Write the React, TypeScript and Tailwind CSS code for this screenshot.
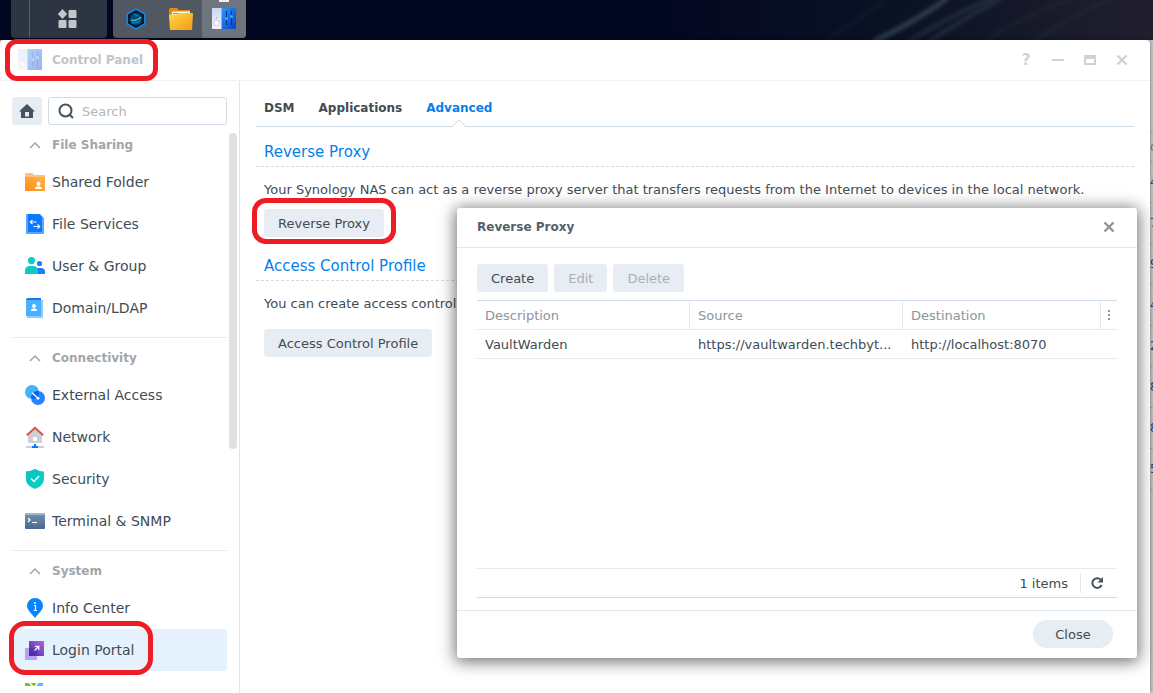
import { type ReactNode } from "react";

const frame = "pointer-events-none absolute border-[5px] border-[#ee1c25]";
const btn = "h-7 rounded-[3px] bg-[#e8edf4] px-3.5 pt-0.5 text-[#414b55]";
const btnOff = "h-7 rounded-[3px] bg-[#e8edf4] px-3.5 pt-0.5 text-[#a9b0b8]";
const sectionTitle = "h-7 border-b border-dashed border-[#cfdbe6] pl-2 pt-px text-[15px] leading-6 text-[#057feb]";
const headCell = "border-b border-r border-t border-b-[#e3e9f0] border-r-[#e3e9f0] border-t-[#cfdbe6] px-2 pt-0.5 font-normal";
const bodyCell = "border-b border-[#e3e9f0] px-2 pt-0.5";

function PanelIcon({ faded = false }: { faded?: boolean }) {
  return (
    <svg viewBox="0 0 24 22" className={faded ? "h-[22px] w-6 opacity-40" : "h-[22px] w-6"} aria-hidden="true">
      <defs>
        <linearGradient id="panelBlue" x1="0" y1="0" x2="1" y2="1">
          <stop offset="0" stopColor="#2a9af8" />
          <stop offset="1" stopColor="#0a3fcc" />
        </linearGradient>
        <linearGradient id="panelWhite" x1="0" y1="0" x2="0" y2="1">
          <stop offset="0" stopColor="#ccd8f4" />
          <stop offset="1" stopColor="#f2f2f8" />
        </linearGradient>
      </defs>
      <path d="M1 0h11v21H1q-1 0-1-1V1q0-1 1-1z" fill="url(#panelWhite)" />
      <circle cx="4.5" cy="15" r="2.800" fill="#fff" stroke="#b9c0d4" strokeWidth=".7" />
      <circle cx="4.5" cy="9.800" r=".6" fill="#8189a0" />
      <path d="M9.500 0H23q1 0 1 1v19q0 1-1 1H9.500z" fill="url(#panelBlue)" />
      <path d="M14.500 3v14M19.500 3v14" stroke="#062f96" strokeWidth="1" />
      <circle cx="14.500" cy="10.500" r="1.500" fill="#4aa5f5" />
      <circle cx="19.500" cy="8.500" r="1.500" fill="#4aa5f5" />
    </svg>
  );
}

function Icon({ children }: { children: ReactNode }) {
  return (
    <svg viewBox="0 0 22 22" className="h-[22px] w-[22px] shrink-0" aria-hidden="true">
      {children}
    </svg>
  );
}

const icons: Record<string, ReactNode> = {
  shared: (
    <Icon>
      <defs>
        <linearGradient id="og" x1="0" x2="1" y1="1" y2="0">
          <stop offset="0" stopColor="#ff8c1a" />
          <stop offset="1" stopColor="#ffb845" />
        </linearGradient>
      </defs>
      <path d="M1 3q0-1 1-1h6l2 2h10q1 0 1 1v3H1z" fill="#ffc27d" />
      <path d="M1 6h20v13q0 1-1 1H2q-1 0-1-1z" fill="url(#og)" />
      <circle cx="14.5" cy="12.8" r="2.100" fill="#fff" />
      <path d="M11 18q0-2.500 2.500-2.500h2q2.500 0 2.500 2.500z" fill="#fff" />
    </Icon>
  ),
  services: (
    <Icon>
      <path d="M2 1h14l4 4v16H2z" fill="#5ba5ff" />
      <path d="M4 1h11l3 3v15H4z" fill="#0a78ff" />
      <path d="M12.500 9h-6M8.500 6.800 6.300 9l2.200 2.200M9.500 13.500h6M13.500 11.300l2.200 2.200-2.200 2.200" fill="none" stroke="#fff" strokeWidth="1.200" />
    </Icon>
  ),
  users: (
    <Icon>
      <circle cx="15.500" cy="8.500" r="2.600" fill="#1f7cff" />
      <path d="M10 19v-2q0-4 4-4h3q4 0 4 4v2z" fill="#1f7cff" />
      <circle cx="7.500" cy="5.600" r="3.600" fill="#0fccc2" />
      <path d="M1 19v-3q0-5 5-5h3q5 0 5 5v3z" fill="#0fc9c4" />
    </Icon>
  ),
  domain: (
    <Icon>
      <path d="M3 3h16v18H3z" fill="#8ccbff" />
      <path d="M2 3q0-2 2-2h13v3H2z" fill="#1b74f5" />
      <path d="M2 3h15v16H2z" fill="#4bb0ff" />
      <circle cx="10" cy="9" r="1.900" fill="#fff" />
      <path d="M6.800 14q0-2.500 2.200-2.500h2q2.200 0 2.200 2.500z" fill="#fff" />
    </Icon>
  ),
  external: (
    <Icon>
      <circle cx="8" cy="8" r="7" fill="#43b3fb" />
      <circle cx="14" cy="14" r="7" fill="#2385ff" />
      <path d="M7 13a7 7 0 0 1 8-5.800A7 7 0 0 1 8.700 15z" fill="#0b63e8" />
      <path d="m8 8.800 6 5.500" stroke="#fff" strokeWidth="1.300" />
      <circle cx="14" cy="14.300" r="1.400" fill="#fff" />
    </Icon>
  ),
  network: (
    <Icon>
      <path d="M4 8 11 2l7 6v8q0 1-1 1H5q-1 0-1-1z" fill="#cdd1d6" />
      <rect x="9" y="11" width="4" height="4" rx=".5" fill="#fff" />
      <path d="m2.800 9.300 8.200-7.500 8.200 7.500" fill="none" stroke="#d9534b" strokeWidth="2" />
      <path d="M2 20h18v2H2z" fill="#cbd0d6" />
      <path d="M10 18h2v2h2v2H8v-2h2z" fill="#0f74f5" />
    </Icon>
  ),
  security: (
    <Icon>
      <path d="M11 1q5 2.500 9 2.500V11q0 6.500-9 10-9-3.500-9-10V3.500Q6 3.500 11 1z" fill="#08cfc4" />
      <path d="M11 1Q6 3.500 2 3.500V11q0 4 3.500 7L18 5z" fill="#0abeb9" opacity=".5" />
      <path d="m7 10.500 3 3 5-5.500" fill="none" stroke="#fff" strokeWidth="1.500" />
    </Icon>
  ),
  terminal: (
    <Icon>
      <defs>
        <linearGradient id="tg" x1="0" y1="0" x2="0" y2="1">
          <stop offset="0" stopColor="#7591b0" />
          <stop offset="1" stopColor="#48698f" />
        </linearGradient>
      </defs>
      <rect x="1" y="3" width="20" height="16" rx="1" fill="url(#tg)" />
      <path d="M1 4q0-1 1-1h18q1 0 1 1v1H1z" fill="#9cb7d2" />
      <path d="m4 8 2 2-2 2M8 12.500h5" fill="none" stroke="#fff" strokeWidth="1.200" />
    </Icon>
  ),
  info: (
    <Icon>
      <path d="M11 1a8 8 0 0 1 8 8c0 4-4.500 7.500-8 12-3.500-4.500-8-8-8-12a8 8 0 0 1 8-8z" fill="#0a83ff" />
      <path d="M10 8.500h1.500v4.500M9.800 13.500H13" fill="none" stroke="#fff" strokeWidth="1.200" />
      <circle cx="11" cy="6" r=".9" fill="#fff" />
    </Icon>
  ),
  portal: (
    <Icon>
      <defs>
        <linearGradient id="pg" x1="1" y1="0" x2="0" y2="1">
          <stop offset="0" stopColor="#b265d8" />
          <stop offset="1" stopColor="#3c2ea8" />
        </linearGradient>
      </defs>
      <rect x="1" y="9" width="12" height="12" rx=".5" fill="#b8a2f2" />
      <rect x="5" y="2" width="15" height="15" rx=".5" fill="url(#pg)" />
      <path d="M5 9h8v8H5z" fill="#4429a6" opacity=".45" />
      <path d="m10.500 11.500 4-4M11 7.300h3.800v3.800" fill="none" stroke="#fff" strokeWidth="1.200" />
    </Icon>
  ),
  regional: (
    <Icon>
      <path d="M1 2h18v18H1z" fill="#7bc80f" />
      <path d="M12 2h7v8h-7z" fill="#5cbcff" />
      <path d="m5 1 5 6 4-6" fill="none" stroke="#fff" strokeWidth="1.500" />
    </Icon>
  ),
};

const sections = [
  { title: "File Sharing", items: [["shared", "Shared Folder"], ["services", "File Services"], ["users", "User & Group"], ["domain", "Domain/LDAP"]] },
  { title: "Connectivity", items: [["external", "External Access"], ["network", "Network"], ["security", "Security"], ["terminal", "Terminal & SNMP"]] },
  { title: "System", items: [["info", "Info Center"], ["portal", "Login Portal"], ["regional", "Regional Options"]] },
];

function Taskbar() {
  return (
    <header className="relative flex h-10 shrink-0 overflow-hidden bg-[#020720] pl-[11px]">
      <svg viewBox="0 0 500 40" preserveAspectRatio="none" className="pointer-events-none absolute right-0 top-0 h-10 w-[500px]" aria-hidden="true">
        <defs>
          <linearGradient id="sky" x1="0" y1="0" x2="1" y2="0">
            <stop offset="0" stopColor="#020720" />
            <stop offset=".5" stopColor="#0b1224" />
            <stop offset="1" stopColor="#211f2e" />
          </linearGradient>
          <filter id="haze"><feGaussianBlur stdDeviation="2" /></filter>
        </defs>
        <path d="M0 0h500v40H0z" fill="url(#sky)" />
        <g filter="url(#haze)" fill="none" stroke="#5b8191">
          <path d="M220 42q45-22 75-44" strokeWidth="4" opacity=".5" />
          <path d="M255 42q45-28 85-44M275 42q40-26 75-44" strokeWidth="2" opacity=".4" />
          <path d="M330 42q45-28 90-44M170 42q30-18 60-40M380 42q40-28 80-44" strokeWidth="2" opacity=".15" />
        </g>
      </svg>
      <button aria-label="Main Menu" className="relative h-[38px] w-24 rounded-b bg-[#2d3442]">
        <span className="absolute left-[18px] top-0 h-[37px] w-px bg-[#596170]" />
        <svg viewBox="0 0 20 20" className="ml-[46px] h-5 w-5" fill="#c3c6cb" aria-hidden="true">
          <path d="m5.500 0 4.700 5-4.700 5L.800 5z" />
          <rect x="11.500" y="1" width="8" height="8" rx="1" />
          <rect x="1.500" y="11" width="8" height="8" rx="1" />
          <rect x="11.500" y="11" width="8" height="8" rx="1" />
        </svg>
      </button>
      <div className="relative ml-1.5 flex h-[38px] overflow-hidden rounded-b bg-[#525862]">
        <button aria-label="Resource" className="flex w-[46px] items-center justify-center">
          <svg viewBox="0 0 22 22" className="h-[22px] w-[22px]" aria-hidden="true">
            <path d="m11 1 8.800 5v10L11 21l-8.800-5V6z" fill="#061a33" stroke="#1583e0" strokeWidth="1.600" strokeLinejoin="round" />
            <circle cx="11" cy="11" r="6" fill="#07486f" />
            <path d="M6 12q5 2 10-3" fill="none" stroke="#27c0e0" strokeWidth="1.500" />
            <path d="M6.500 14.500q4.500 1.500 9-1.500M9 6.500l4 1" fill="none" stroke="#1489b8" strokeWidth="1.200" />
          </svg>
        </button>
        <button aria-label="File Station" className="flex w-[43px] items-center justify-center">
          <svg viewBox="0 0 24 24" className="h-6 w-6" aria-hidden="true">
            <defs>
              <linearGradient id="fg" x1="0" y1="0" x2="1" y2="1">
                <stop offset="0" stopColor="#ffd84b" />
                <stop offset="1" stopColor="#f79a12" />
              </linearGradient>
            </defs>
            <path d="M0 2.500Q0 1 1.500 1H8l2 2h11v8H0z" fill="#dc8b10" />
            <path d="M3 4.500h18v7H3z" fill="#f4f8ec" />
            <path d="M4 6h16v1H4z" fill="#5fb987" />
            <path d="M0 8.500q0-1 1-1h7l2-1.500h13q1 0 1 1L23 23H1z" fill="url(#fg)" />
          </svg>
        </button>
        <button aria-label="Control Panel" className="relative flex w-11 items-center justify-center bg-[#6f757d]">
          <span className="absolute left-[17px] top-0 h-0.5 w-2.5 bg-[#f0f1f2]" />
          <PanelIcon />
        </button>
      </div>
    </header>
  );
}

function Sidebar() {
  return (
    <nav className="relative flex w-60 shrink-0 flex-col border-r border-[#dfe5ec] pb-[7px] pl-3 pr-3 pt-4">
      <div className="flex shrink-0 gap-1.5">
        <button aria-label="Home" className="flex h-7 w-[30px] items-center justify-center rounded-[3px] bg-[#e8edf4]">
          <svg viewBox="0 0 16 14" className="h-3.5 w-4" aria-hidden="true">
            <path d="M8 0 0 7.500h2V14h12V7.500h2zM6 8h4v4.500H6z" fill="#46515c" fillRule="evenodd" />
          </svg>
        </button>
        <label className="flex h-7 min-w-0 flex-1 items-center gap-2 rounded-[3px] border border-[#d0dde9] pl-[9px]">
          <svg viewBox="0 0 16 16" className="h-4 w-4 shrink-0" fill="none" stroke="#46515c" strokeWidth="2" aria-hidden="true">
            <circle cx="7.500" cy="7.500" r="6" />
            <path d="m11 11 4 4" />
          </svg>
          <input aria-label="Search" placeholder="Search" className="min-w-0 flex-1 bg-transparent pt-0.5 outline-none placeholder:text-[#b1b6bb]" />
        </label>
      </div>
      <div className="min-h-0 flex-1 overflow-hidden">
        {sections.map((s, i) => (
          <section key={s.title} className={i > 0 ? "mt-2 border-t border-[#e6eaee]" : ""}>
            <h2 className="h-9 pt-[3px] font-bold text-[#a0a6ab]">
              <button className="flex h-full w-full items-center pl-[17px] text-[12px]">
                <svg viewBox="0 0 12 8" className="mr-[11px] h-2 w-3" fill="none" stroke="#a0a6ab" strokeWidth="1.500" aria-hidden="true">
                  <path d="m1 7 5-5 5 5" />
                </svg>
                {s.title}
              </button>
            </h2>
            {s.items.map(([icon, name]) => (
              <a
                key={name}
                href="#"
                className={
                  name === "Login Portal"
                    ? "flex h-[42px] items-center gap-1.5 rounded bg-[#e5f1fd] pl-3 text-[14px]"
                    : "flex h-[42px] items-center gap-1.5 pl-3 text-[14px]"
                }
              >
                {icons[icon]}
                {name}
              </a>
            ))}
          </section>
        ))}
      </div>
      <span className="absolute right-0.5 top-[52px] h-[316px] w-2 rounded-full bg-[#e0e0e0]" />
      <span className={`${frame} bottom-[18px] left-[9px] h-[54px] w-36 rounded-[16px]`} />
    </nav>
  );
}

function ReverseProxyDialog() {
  return (
    <div role="dialog" aria-label="Reverse Proxy" className="absolute right-[13px] top-[168px] flex h-[450px] w-[680px] flex-col rounded-[3px] bg-white shadow-[0_2px_16px_2px_rgba(0,0,0,0.55)]">
      <div className="flex h-10 shrink-0 items-center justify-between border-b border-[#dfe7ef] px-5 pb-0.5">
        <h2 className="text-[12px] font-bold text-[#555f69]">Reverse Proxy</h2>
        <button aria-label="Close dialog" className="mr-0.5">
          <svg viewBox="0 0 12 12" className="h-3 w-3" stroke="#8d949b" strokeWidth="2.400" aria-hidden="true">
            <path d="m1.500 1.500 9 9M10.500 1.500l-9 9" />
          </svg>
        </button>
      </div>
      <div className="flex min-h-0 flex-1 flex-col px-5 pb-3 pt-4">
        <div className="flex gap-1.5">
          <button className={btn}>Create</button>
          <button disabled className={btnOff}>Edit</button>
          <button disabled className={btnOff}>Delete</button>
        </div>
        <table className="mt-2 w-full table-fixed border-separate border-spacing-0 text-left">
          <thead>
            <tr className="h-[30px] text-[#8d949a]">
              <th className={`${headCell} w-[213px]`}>Description</th>
              <th className={`${headCell} w-[213px]`}>Source</th>
              <th className={headCell}>Destination</th>
              <th className="w-4 border-b border-t border-b-[#e3e9f0] border-t-[#cfdbe6]">
                <button aria-label="Columns" className="flex w-full justify-center">
                  <svg viewBox="0 0 2 10" className="h-2.5 w-0.5" fill="#8d949b" aria-hidden="true">
                    <path d="M0 0h2v2H0zM0 4h2v2H0zM0 8h2v2H0z" />
                  </svg>
                </button>
              </th>
            </tr>
          </thead>
          <tbody>
            <tr className="h-[29px]">
              <td className={bodyCell}>VaultWarden</td>
              <td className={bodyCell}>https://vaultwarden.techbyt...</td>
              <td className={bodyCell} colSpan={2}>http://localhost:8070</td>
            </tr>
          </tbody>
        </table>
        <div className="mt-auto flex h-[30px] items-center justify-end border-b border-t border-b-[#cfdbe6] border-t-[#e3e9f0]">
          <span className="pt-0.5">1 items</span>
          <span className="ml-3 mr-2.5 h-5 w-px bg-[#dfe7ef]" />
          <button aria-label="Refresh" className="mr-3.5">
            <svg viewBox="0 0 12 12" className="h-3 w-3" aria-hidden="true">
              <path d="M9.500 2.600A4.800 4.800 0 1 0 10.600 8" fill="none" stroke="#46515c" strokeWidth="2" />
              <path d="M12 0v5.500H6.500z" fill="#46515c" />
            </svg>
          </button>
        </div>
      </div>
      <div className="flex h-12 shrink-0 items-start justify-end border-t border-[#dfe7ef] px-6 pt-[9px]">
        <button className="h-7 w-20 rounded-full bg-[#e8edf4] pt-0.5">Close</button>
      </div>
    </div>
  );
}

function Content() {
  return (
    <main className="min-w-0 flex-1 pl-4 pr-4">
      <div role="tablist" className="flex h-[46px] items-center gap-6 border-b border-[#cfdde9] pl-2 pt-2 text-[12px] font-bold">
        <button role="tab">DSM</button>
        <button role="tab">Applications</button>
        <button role="tab" aria-selected="true" className="relative h-full text-[#057feb]">
          Advanced
          <svg viewBox="0 0 14 8" className="absolute -bottom-px left-1/2 -ml-[7px] h-2 w-3.5" aria-hidden="true">
            <path d="M0 8 7 1l7 7z" fill="#fff" stroke="none" />
            <path d="m0 7.500 7-6.500 7 6.500" fill="none" stroke="#cfdde9" />
          </svg>
        </button>
      </div>
      <section className="pt-3">
        <h3 className={sectionTitle}>Reverse Proxy</h3>
        <p className="whitespace-nowrap pl-2 pt-[13px] leading-5">
          Your Synology NAS can act as a reverse proxy server that transfers requests from the Internet to devices in the local network.
        </p>
        <div className="relative ml-2 mt-[9px] w-fit">
          <button className={btn}>Reverse Proxy</button>
          <span className={`${frame} -left-3 -right-3 -top-[11px] h-[46px] rounded-[14px]`} />
        </div>
      </section>
      <section className="pt-4">
        <h3 className={sectionTitle}>Access Control Profile</h3>
        <p className="pl-2 pt-[13px] leading-5">You can create access control profiles.</p>
        <button className={`${btn} ml-2 mt-[15px]`}>Access Control Profile</button>
      </section>
    </main>
  );
}

export default function App() {
  return (
    <div className="flex h-screen flex-col overflow-hidden bg-[#c6c6c6] font-['DejaVu_Sans',Verdana,sans-serif] text-[13px] leading-5 text-[#414b55]">
      <Taskbar />
      <div className="flex min-h-0 flex-1">
        <div className="relative z-10 flex min-w-0 flex-1 flex-col rounded-t bg-white shadow-[0_0_4px_rgba(0,0,0,0.4)]">
          <div className="flex h-[41px] shrink-0 items-center border-b border-[#eff2f5] pl-[18px] pr-[22px]">
            <PanelIcon faded />
            <h1 className="ml-2.5 text-[12px] font-bold text-[#c1c4c8]">Control Panel</h1>
            <div className="ml-auto flex items-center gap-5 text-[#d0d2d6]">
              <button aria-label="Help" className="w-3 text-[15px] font-bold">?</button>
              <button aria-label="Minimize" className="flex h-3 w-3 items-center">
                <span className="h-0.5 w-3 bg-[#d0d2d6]" />
              </button>
              <button aria-label="Maximize" className="h-2.5 w-3 border-2 border-t-4 border-[#d0d2d6]" />
              <button aria-label="Close">
                <svg viewBox="0 0 12 12" className="h-3 w-3" stroke="#d0d2d6" strokeWidth="2.400" aria-hidden="true">
                  <path d="m1.500 1.500 9 9M10.500 1.500l-9 9" />
                </svg>
              </button>
            </div>
            <span className={`${frame} left-[5px] -top-px h-[42px] w-[153px] rounded-[12px]`} />
          </div>
          <div className="flex min-h-0 flex-1">
            <Sidebar />
            <Content />
          </div>
          <ReverseProxyDialog />
        </div>
        <div className="w-[3px] shrink-0 overflow-hidden pt-[92px] text-[12px] text-[#27406b]">
          <div className="flex h-[29px] items-center border-t border-[#aaaaaa] text-[#777777]">o</div>
          {["4", "7", "9", "4", "2", "8", "8", "5"].map((n, i) => (
            <div key={i} className="flex h-[41px] items-center border-t border-[#aaaaaa]">{n}</div>
          ))}
          <div className="border-t border-[#aaaaaa]" />
        </div>
      </div>
    </div>
  );
}
